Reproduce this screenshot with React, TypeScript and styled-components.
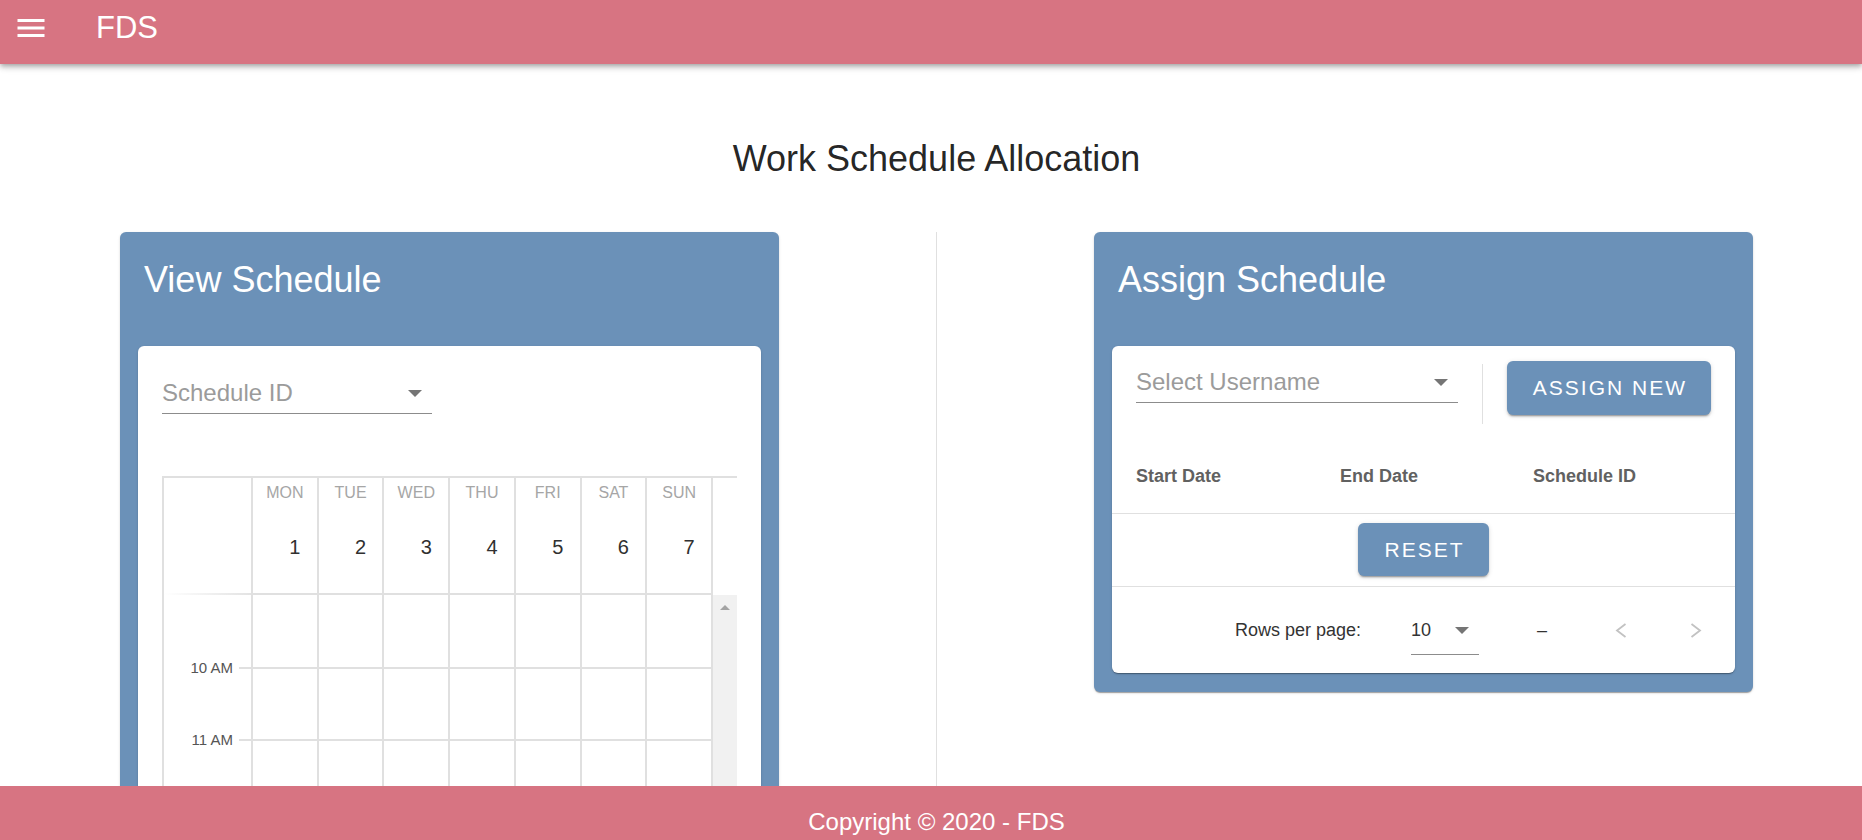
import styled, { createGlobalStyle } from 'styled-components'

const GlobalStyle = createGlobalStyle`
  html, body {
    margin: 0;
    padding: 0;
    overflow: hidden;
  }
  body {
    font-family: "Liberation Sans", Arial, Helvetica, sans-serif;
    background: #ffffff;
  }
  * {
    box-sizing: border-box;
  }
`

const days = [
  { name: 'MON', date: 1 },
  { name: 'TUE', date: 2 },
  { name: 'WED', date: 3 },
  { name: 'THU', date: 4 },
  { name: 'FRI', date: 5 },
  { name: 'SAT', date: 6 },
  { name: 'SUN', date: 7 },
]

// only the slots that show above the footer get a label
const timeRows = ['10 AM', '11 AM', '']

function MenuIcon() {
  return (
    <svg width="36" height="36" viewBox="0 0 24 24" fill="#ffffff">
      <path d="M3 18h18v-2H3v2zm0-5h18v-2H3v2zm0-7v2h18V6H3z" />
    </svg>
  )
}

function Chevron({ dir }: { dir: 'left' | 'right' }) {
  const points = dir === 'left' ? '10.5,1 2,7.5 10.5,14' : '1.5,1 10,7.5 1.5,14'
  return (
    <svg width="12" height="15" viewBox="0 0 12 15">
      <polyline points={points} fill="none" stroke="#c2c2c2" strokeWidth="1.8" />
    </svg>
  )
}

export default function App() {
  return (
    <Page>
      <GlobalStyle />
      <AppBar>
        <MenuButton>
          <MenuIcon />
        </MenuButton>
        <Brand>FDS</Brand>
      </AppBar>

      <Main>
        <PageTitle>Work Schedule Allocation</PageTitle>
        <Columns>
          <Card>
            <CardTitle>View Schedule</CardTitle>
            <CardBody>
              <SelectField $width={270} $top={32}>
                <SelectLabel>Schedule ID</SelectLabel>
                <DropArrow />
              </SelectField>

              <Calendar>
                <CalHeader>
                  <TimeHeadCell />
                  {days.map((d) => (
                    <DayHeadCell key={d.name}>
                      <DayName>{d.name}</DayName>
                      <DayNumber>{d.date}</DayNumber>
                    </DayHeadCell>
                  ))}
                  <HeadGutter />
                </CalHeader>
                <CalBody>
                  {timeRows.map((label, i) => (
                    <CalRow key={i}>
                      <TimeCell style={{ gridRow: i + 1 }}>
                        {label && <TimeLabel>{label}</TimeLabel>}
                        <TimeTick />
                      </TimeCell>
                      {days.map((d) => (
                        <SlotCell key={d.name} style={{ gridRow: i + 1 }} />
                      ))}
                    </CalRow>
                  ))}
                  <ScrollTrack>
                    <ScrollArrow />
                  </ScrollTrack>
                </CalBody>
              </Calendar>
            </CardBody>
          </Card>

          <VDivider />

          <Card $short>
            <CardTitle>Assign Schedule</CardTitle>
            <CardBody $table>
              <AssignRow>
                <SelectField $top={6} $grow>
                  <SelectLabel>Select Username</SelectLabel>
                  <DropArrow />
                </SelectField>
                <RowDivider />
                <ActionButton $wide>ASSIGN NEW</ActionButton>
              </AssignRow>

              <HeadRow>
                <HeadCell>Start Date</HeadCell>
                <HeadCell>End Date</HeadCell>
                <HeadCell>Schedule ID</HeadCell>
              </HeadRow>

              <ResetRow>
                <ActionButton>RESET</ActionButton>
              </ResetRow>

              <Pagination>
                <Caption>Rows per page:</Caption>
                <PageSelect>
                  <PageValue>10</PageValue>
                  <DropArrow />
                </PageSelect>
                <Dash>–</Dash>
                <NavButton $gap={68}>
                  <Chevron dir="left" />
                </NavButton>
                <NavButton $gap={63}>
                  <Chevron dir="right" />
                </NavButton>
              </Pagination>
            </CardBody>
          </Card>
        </Columns>
      </Main>

      <Footer>Copyright © 2020 - FDS</Footer>
    </Page>
  )
}

const Page = styled.div`
  height: 100vh;
  display: flex;
  flex-direction: column;
  overflow: hidden;
`

const AppBar = styled.header`
  position: relative;
  z-index: 2;
  flex: 0 0 64px;
  display: flex;
  align-items: center;
  padding: 0 0 8px 13px;
  background: #d77482;
  box-shadow: 0 2px 4px -1px rgba(0, 0, 0, 0.2), 0 4px 5px 0 rgba(0, 0, 0, 0.14), 0 1px 10px 0 rgba(0, 0, 0, 0.12);
`

const MenuButton = styled.div`
  width: 36px;
  height: 36px;
  display: flex;
`

const Brand = styled.div`
  margin-left: 47px;
  font-size: 31px;
  line-height: 40px;
  color: #ffffff;
`

const Main = styled.main`
  flex: 1;
  min-height: 0;
  overflow: hidden;
  padding-top: 73px;
`

const PageTitle = styled.h1`
  margin: 0 109px 51px 120px;
  font-size: 36px;
  line-height: 44px;
  font-weight: 400;
  text-align: center;
  color: rgba(0, 0, 0, 0.87);
`

const Columns = styled.div`
  display: grid;
  grid-template-columns: 1fr 1px 1fr;
  column-gap: 157px;
  padding: 0 109px 0 120px;
  align-items: start;
`

const Card = styled.section<{ $short?: boolean }>`
  background: #6b91b8;
  border-radius: 6px;
  padding-bottom: ${(p) => (p.$short ? '19px' : '40px')};
  box-shadow: 0 2px 1px -1px rgba(0, 0, 0, 0.2), 0 1px 1px 0 rgba(0, 0, 0, 0.14), 0 1px 3px 0 rgba(0, 0, 0, 0.12);
`

const CardTitle = styled.h2`
  margin: 0;
  padding: 26px 24px 44px;
  font-size: 36px;
  line-height: 44px;
  font-weight: 400;
  color: #ffffff;
`

const CardBody = styled.div<{ $table?: boolean }>`
  display: flow-root;
  margin: 0 18px;
  background: #ffffff;
  border-radius: 6px;
  padding: ${(p) => (p.$table ? '0' : '0 24px 24px')};
  box-shadow: 0 2px 1px -1px rgba(0, 0, 0, 0.2), 0 1px 1px 0 rgba(0, 0, 0, 0.14), 0 1px 3px 0 rgba(0, 0, 0, 0.12);
`

const SelectField = styled.div<{ $width?: number; $top: number; $grow?: boolean }>`
  display: flex;
  align-items: center;
  justify-content: space-between;
  width: ${(p) => (p.$width ? `${p.$width}px` : 'auto')};
  flex: ${(p) => (p.$grow ? '1' : '0 0 auto')};
  margin-top: ${(p) => p.$top}px;
  padding: 0 10px 5px 0;
  border-bottom: 1px solid #8c8c8c;
`

const SelectLabel = styled.span`
  font-size: 24px;
  line-height: 30px;
  color: #9b9b9b;
`

const DropArrow = styled.span`
  width: 0;
  height: 0;
  border-left: 7.5px solid transparent;
  border-right: 7.5px solid transparent;
  border-top: 7.5px solid #757575;
`

const Calendar = styled.div`
  margin-top: 62px;
`

const calColumns = '89px repeat(7, 1fr) 26px'

const CalHeader = styled.div`
  display: grid;
  grid-template-columns: ${calColumns};
  height: 119px;
  border-top: 2px solid #e0e0e0;
`

const TimeHeadCell = styled.div`
  border-left: 2px solid #e0e0e0;
  background: linear-gradient(to right, #ffffff, #e3e3e3) bottom / 100% 2px no-repeat;
`

const DayHeadCell = styled.div`
  display: flex;
  flex-direction: column;
  align-items: center;
  padding-top: 5px;
  border-left: 2px solid #e0e0e0;
  border-bottom: 2px solid #e0e0e0;
`

const DayName = styled.div`
  font-size: 16px;
  line-height: 20px;
  color: #a6a6a6;
`

const DayNumber = styled.div`
  margin-top: 32px;
  padding-left: 20px;
  font-size: 20px;
  line-height: 24px;
  color: #303030;
`

const HeadGutter = styled.div`
  border-left: 2px solid #e0e0e0;
`

const CalBody = styled.div`
  display: grid;
  grid-template-columns: ${calColumns};
  grid-template-rows: 74px;
  grid-auto-rows: 72px;
`

const CalRow = styled.div`
  display: contents;
`

const TimeCell = styled.div`
  grid-column: 1;
  display: flex;
  justify-content: flex-end;
  align-items: flex-end;
  border-left: 2px solid #e0e0e0;
`

const TimeLabel = styled.span`
  margin: 0 6px -8px 0;
  font-size: 15px;
  line-height: 18px;
  color: #555555;
`

const TimeTick = styled.span`
  width: 12px;
  height: 2px;
  background: #e0e0e0;
`

const SlotCell = styled.div`
  border-left: 2px solid #e0e0e0;
  border-bottom: 2px solid #e0e0e0;
`

const ScrollTrack = styled.div`
  grid-column: 9;
  grid-row: 1 / span 3;
  display: flex;
  justify-content: center;
  padding-top: 10px;
  border-left: 2px solid #e0e0e0;
  background: #f1f1f1;
`

const ScrollArrow = styled.span`
  width: 0;
  height: 0;
  border-left: 5.5px solid transparent;
  border-right: 5.5px solid transparent;
  border-bottom: 5px solid #a3a3a3;
`

const VDivider = styled.div`
  align-self: stretch;
  background: #e0e0e0;
`

const AssignRow = styled.div`
  display: flex;
  align-items: flex-start;
  padding: 15px 24px 0;
  height: 78px;
`

const RowDivider = styled.div`
  flex: 0 0 1px;
  height: 60px;
  margin: 3px 24px 0;
  background: #e0e0e0;
`

const ActionButton = styled.button<{ $wide?: boolean }>`
  height: ${(p) => (p.$wide ? '54px' : '53px')};
  padding: 0 24px 0 26px;
  border: none;
  border-radius: 6px;
  background: #6b91b8;
  color: #ffffff;
  font-family: inherit;
  font-size: 21px;
  letter-spacing: 2px;
  cursor: pointer;
  box-shadow: 0 3px 1px -2px rgba(0, 0, 0, 0.2), 0 2px 2px 0 rgba(0, 0, 0, 0.14), 0 1px 5px 0 rgba(0, 0, 0, 0.12);
`

const HeadRow = styled.div`
  display: grid;
  grid-template-columns: 204px 193px 1fr;
  padding: 40px 0 25px;
  border-bottom: 1px solid #e0e0e0;
`

const HeadCell = styled.div`
  padding-left: 24px;
  font-size: 18px;
  line-height: 24px;
  font-weight: 700;
  color: #616161;
`

const ResetRow = styled.div`
  display: flex;
  justify-content: center;
  padding: 9px 0 10px;
  border-bottom: 1px solid #e0e0e0;
`

const Pagination = styled.div`
  height: 86px;
  display: flex;
  align-items: center;
  justify-content: flex-end;
  padding-right: 33px;
`

const Caption = styled.span`
  font-size: 18px;
  color: #333333;
`

const PageSelect = styled.div`
  width: 68px;
  margin-left: 50px;
  display: flex;
  align-items: center;
  justify-content: space-between;
  padding: 13px 10px 12px 0;
  border-bottom: 1px solid #8c8c8c;
`

const PageValue = styled.span`
  font-size: 18px;
  line-height: 24px;
  color: #333333;
`

const Dash = styled.span`
  margin-left: 58px;
  font-size: 18px;
  color: #333333;
`

const NavButton = styled.span<{ $gap: number }>`
  display: flex;
  margin-left: ${(p) => p.$gap}px;
`

const Footer = styled.footer`
  flex: 0 0 54px;
  padding: 18px 109px 0 120px;
  background: #d77482;
  color: #ffffff;
  font-size: 24px;
  line-height: 36px;
  text-align: center;
`
